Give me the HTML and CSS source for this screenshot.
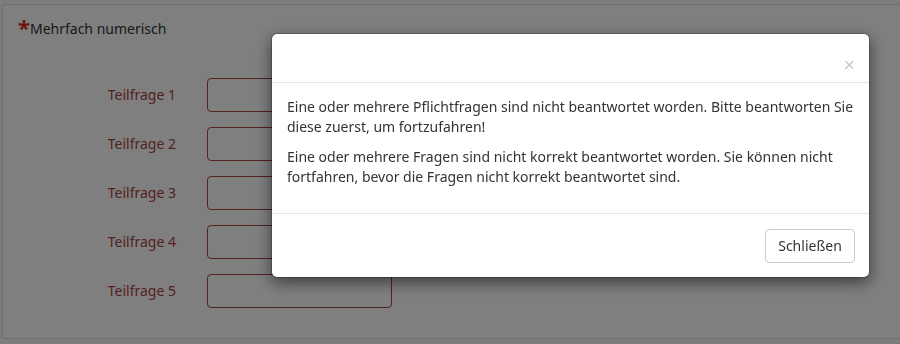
FILE: index.html
```html
<!DOCTYPE html>
<html lang="de">
<head>
<meta charset="utf-8">
<title>Mehrfach numerisch</title>
<link rel="stylesheet" href="styles.css">
</head>
<body>
<div class="page">
  <div class="panel">
    <div class="question-title"><span class="required">*</span>Mehrfach numerisch</div>
    <div class="subquestions">
      <label class="sq-label">Teilfrage 1</label><input class="sq-input" type="text">
      <label class="sq-label">Teilfrage 2</label><input class="sq-input" type="text">
      <label class="sq-label">Teilfrage 3</label><input class="sq-input" type="text">
      <label class="sq-label">Teilfrage 4</label><input class="sq-input" type="text">
      <label class="sq-label">Teilfrage 5</label><input class="sq-input" type="text">
    </div>
  </div>
</div>
<div class="backdrop"></div>
<div class="modal-wrap">
  <div class="modal">
    <div class="modal-header">
      <button class="close" type="button">×</button>
    </div>
    <div class="modal-body">
      <p>Eine oder mehrere Pflichtfragen sind nicht beantwortet worden. Bitte beantworten Sie diese zuerst, um fortzufahren!</p>
      <p>Eine oder mehrere Fragen sind nicht korrekt beantwortet worden. Sie können nicht fortfahren, bevor die Fragen nicht korrekt beantwortet sind.</p>
    </div>
    <div class="modal-footer">
      <button class="btn" type="button">Schließen</button>
    </div>
  </div>
</div>
</body>
</html>
```
FILE: styles.css
```css
* { box-sizing: border-box; }
html, body { margin: 0; padding: 0; }
body {
  background: #f8f8f8;
  font-family: "Noto Sans", "Open Sans", sans-serif;
  font-size: 14px;
  line-height: 20px;
  color: #333;
  overflow: hidden;
  width: 900px;
  height: 344px;
}
.page {
  padding: 4px 0 0 2px;
}
.panel {
  width: 898px;
  height: 335px;
  background: #fff;
  border: 1px solid #dcdcdc;
  border-right: none;
  border-radius: 3px 0 0 3px;
  padding: 14px 15px 0 15px;
}
.question-title {
  font-size: 14px;
  line-height: 20px;
  color: #333;
}
.required {
  color: #d9261f;
  font-weight: bold;
  font-size: 22px;
  line-height: 10px;
  vertical-align: top;
  position: relative;
  top: 3px;
}
.subquestions {
  display: grid;
  grid-template-columns: 158px 185px;
  column-gap: 31px;
  row-gap: 15px;
  margin-top: 39px;
  align-items: center;
}
.sq-label {
  text-align: right;
  color: #a94442;
}
.sq-input {
  height: 34px;
  border: 1px solid #a94442;
  border-radius: 4px;
  background: #fff;
  font: inherit;
}
.backdrop {
  position: fixed;
  inset: 0;
  background: rgba(0, 0, 0, 0.5);
}
.modal-wrap {
  position: fixed;
  top: 33px;
  left: 271px;
}
.modal {
  width: 599px;
  background: #fff;
  border: 1px solid rgba(0, 0, 0, 0.2);
  border-radius: 6px;
  box-shadow: 0 5px 15px rgba(0, 0, 0, 0.5);
  background-clip: padding-box;
}
.modal-header {
  height: 49px;
  border-bottom: 1px solid #e5e5e5;
  padding: 14px 14px 0 15px;
  display: flex;
  justify-content: flex-end;
}
.close {
  border: 0;
  background: transparent;
  padding: 0;
  font-family: "Noto Sans", sans-serif;
  font-size: 20px;
  line-height: 20px;
  color: #000;
  opacity: 0.22;
  cursor: pointer;
}
.modal-body {
  padding: 14px 15px 16px 15px;
}
.modal-body p {
  margin: 0 0 10px;
}
.modal-footer {
  border-top: 1px solid #e5e5e5;
  padding: 15px 14px 14px;
  display: flex;
  justify-content: flex-end;
}
.btn {
  font: inherit;
  color: #333;
  background: #fff;
  border: 1px solid #ccc;
  border-radius: 4px;
  padding: 6px 12px;
  height: 34px;
  width: 90px;
}
```
